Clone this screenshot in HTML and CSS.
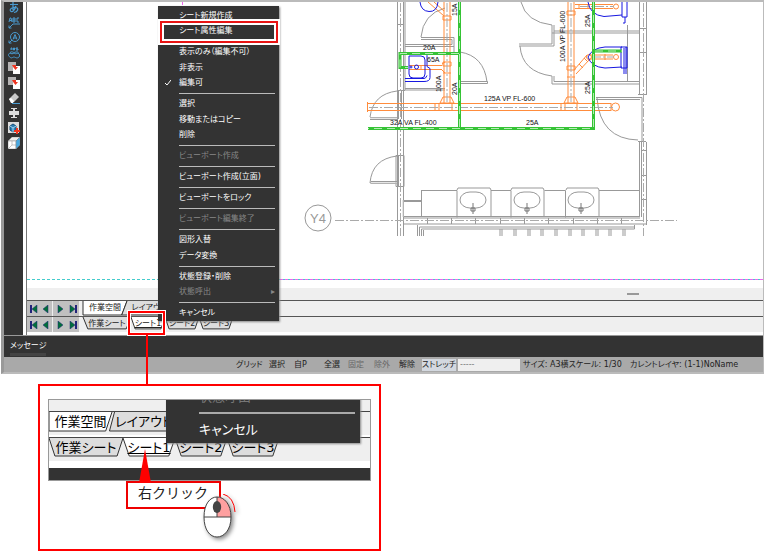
FILE: index.html
```html
<!DOCTYPE html>
<html lang="ja">
<head>
<meta charset="utf-8">
<title>シート属性編集</title>
<link rel="stylesheet" href="styles.css">
</head>
<body>
<main class="page">
<section class="app">
  <div class="workspace">
    <nav class="toolbar" aria-label="ツール">
      <button aria-label="文字"><svg viewBox="0 0 12 12" fill="none" stroke="#4a9bd0" stroke-width="1.2"><path d="M2 2.500h8M5 0v8M8 4C7 8 4 11 2.500 9S5 5 8 5.500 10 10 6 10.500"/></svg></button>
      <button aria-label="引出文字"><svg viewBox="0 0 12 12" fill="none" stroke="#4a9bd0"><path d="M1 5l1-4h1l1 4M1.500 3.500h2M5 1v4h2V1H5M5 3h2M11 1H9v4h2M1 11l4-4h7M1 8.500V11h2.500"/></svg></button>
      <button aria-label="記号"><svg viewBox="0 0 12 12" fill="none" stroke="#4a9bd0"><circle cx="7" cy="5" r="4.500"/><path d="M5 7.500l2-5 2 5M5.500 6h3M4 8l-3 3M1 8.500V11h2.500"/></svg></button>
      <button aria-label="雲マーク"><svg viewBox="0 0 12 12" fill="none" stroke="#4a9bd0"><path d="M3 3V1h1v2M5.500 1v2h1V1zM10 1H8v1h2v1H8M2 5.500c2-1.500 3 0 4 0s3-1.500 4.500 0M2 6c-2 1-2 3 0 4 1 2 3 0 4 0s3 2 5 0c1-1 1-3-1-4-2 1-3 1-4 0-1 1-3 1-4 0z"/></svg></button>
      <button aria-label="コピー"><svg viewBox="0 0 12 12"><path d="M0 0h8v9H0z" fill="#b5b3b3"/><path d="M5 4h7v8H5z" fill="#fff"/><path d="M4 3l4 0v2h2L7.500 8 5.500 5.500z" fill="#ef3420"/></svg></button>
      <button aria-label="移動"><svg viewBox="0 0 12 12"><path d="M0 0h8v8H0z" fill="#b5b3b3"/><path d="M5 3h7v9H5z" fill="#fff"/><path d="M4 3l4 0v2h2L7.500 8 5.500 5.500z" fill="#ef3420"/></svg></button>
      <button aria-label="消去"><svg viewBox="0 0 12 12"><path d="M1 7l6-6 4 4-5 5H3z" fill="#c9c9c9"/><path d="M1 7l2-1 3 3-1 2H3z" fill="#fff"/><path d="M4 11.500h8" stroke="#4a9bd0"/></svg></button>
      <button aria-label="寸法"><svg viewBox="0 0 12 12" fill="#ddd"><path d="M3 1h6v1H7v2h4v4H7v2h2v1H3v-1h2V8H1V4h4V2H3z"/></svg></button>
      <button aria-label="部品"><svg viewBox="0 0 12 12"><path d="M0 0h11v11H0z" fill="#ddd"/><path d="M2 4l3-2 3 2v4L5 10 2 8z" fill="#2d7fb5" stroke="#154d77"/><path d="M2 4l3 2 3-2M5 6v4" fill="none" stroke="#a8d6ef"/><path d="M8 6h2v2h2v2h-2v2H8v-2H6V8h2z" fill="#ef3420"/></svg></button>
      <button aria-label="立体"><svg viewBox="0 0 12 12" stroke="#888" stroke-width=".5"><path d="M0 4l4-4h8L8 4z" fill="#eee"/><path d="M0 4h8v8H0z" fill="#fff"/><path d="M8 4l4-4v8l-4 4z" fill="#48a8e0"/><path d="M0 12l4-4h4M4 4v4" fill="none"/></svg></button>
    </nav>
    <div class="sheet-area">
      <svg class="drawing" viewBox="27 2 736 286" preserveAspectRatio="xMinYMin meet" role="img" aria-label="配管図">
        <g class="thin">
          <path d="M397.500 2V236M403.500 2V236M405 2V90M397 24.500h7M397 90.500h8M370 117.500h27M370 119.500h27M370 117Q373 94 397 91M398.500 91v28M401.500 91v28"/>
          <path d="M370 183Q372 159 397 156M371 181.500h26M371 183.500h26M370 183h1M396 155.500h8v31h-8zM398.500 156v30"/>
          <path d="M421 37.500h33v15h4M421 39.500h31v5M421 37Q423 14 445 8M405 44.500h47M405 46.500h49M460 52Q484 56 487 82M458 81.500h29.500v2H458M405 88.500h40M405 90h40"/>
          <path d="M521 2Q526 22 552 25v8h87M554 25v6h85M552 33v11h-33M554 31v15h-35M520 46Q522 72 552 76v8h87M554 76v5.500h85M627.500 25v57"/>
          <path d="M639.500 2v93M646.500 2v92M640 28.500h6M640 52.500h6M638 94.500h9M596 97.500h46v44M596 99.500h44M597 98Q600 139 638 140M638 141.500h8"/>
          <path d="M639.500 142v75M641.500 142v75M646.500 142v83M642 150.500h4M642 175.500h4M642 199.500h4"/>
          <path d="M403 200.500h18M404 201.500h17M421 190.500h36v27M421.500 190v27M457 190l1-2h32l1 2v27M491 190.500h20v27M511 190l1-2h31l1 2v27M544.500 190.500h21v27M566 190l1-2h31l1 2v27M599 190.500h40"/>
          <path d="M403 216.500h237M403 218h237M403 224h244M427.500 218v6M451.500 218v6M475.500 218v6M500.500 218v6M524.500 218v6M548.500 218v6M573.500 218v6M597.500 218v6M621.500 218v6"/>
          <path d="M417.500 236v-11M419.500 236v-9h215M421.500 236v-7h213V225M423.500 236v-6"/>
          <path d="M500 229v7m2-7v7m12-7v7m2-7v7m12-7v7m2-7v7m11-7v7m2-7v7m12-7v7m2-7v7m12-7v7m2-7v7m11-7v7m2-7v7m12-7v7m2-7v7m11-7v7m2-7v7m12-7v7m2-7v7"/>
          <rect x="460" y="192" width="26" height="16" rx="10"/><rect x="514" y="192" width="26" height="16" rx="10"/><rect x="568" y="192" width="26" height="16" rx="10"/>
          <circle cx="318" cy="218" r="13"/>
        </g>
        <g class="shade"><path d="M421 227h213M403 200v17M370 118h27M371 183h26"/></g>
        <g class="faucet"><path d="M473 203v11M471 208h4v3h-4zM527 203v11M525 208h4v3h-4zM581 203v11M579 208h4v3h-4z"/></g>
        <g class="axis"><path d="M335 220.500H677M400.500 3V236M643.500 3V236"/></g>
        <g class="orange">
          <path d="M444 2v101M450 2v101M443 16h8v4h-8zM443 62h8v4h-8zM443 73h8M443 97h8l3 6h-14zM368 103.500h243M368 110.500h243M367.500 102v10M435 103v8M439 103v8M452 103v8M428 2l16 14M434 2l10 9M409 65.500h33M409 69.500h33M421 65v4M442 64l3-2M442 70l3 3"/>
          <path d="M568 2v101M574 2v101M567 11h8v4h-8zM567 66h8v4h-8zM567 77h8M567 97h8l3 6h-14zM561 103v8M565 103v8M577 103v8M611 103v8M575 4.500h38M575 8.500h38M579 4v5M588 4v5M590 55h23M590 59h23M594 54v6M605 54v6M574 70l13-15M576 74l14-15M579 64l4 4M584 58l4 4"/>
          <circle cx="615.500" cy="107" r="4"/><circle cx="616" cy="6.500" r="2.500"/><circle cx="616" cy="57" r="2.500"/><circle cx="589" cy="57" r="2.500"/>
        </g>
        <g class="axis"><path d="M447 3v101M571 3v101M369 107.500h244M592 57h22M580 6.500h34"/></g>
        <g class="blue">
          <path d="M420 2Q421 11 429 11.500T438 2"/>
          <path d="M405 52.500h19q3 0 3 3v11l3 2v9q0 4-6 4h-19M405 78.500h19q2 0 3-3M409 56h12q4 0 4 4v14q0 4-4 4h-8q-4 0-4-4z"/><circle cx="416.500" cy="67" r="2"/><circle cx="411" cy="67" r="1"/>
          <path d="M588 2Q590 15 604 16.500L622 15M622 2v15h5V2M625 17v6h-2M622 47h-17q-13 1-17 10 3 10 17 11l17-1M621 47h6v21h-6zM624 48v26M626 47v27"/>
        </g>
        <g class="green"><path d="M459.500 2v126M593.500 2v126.500H368M459 53.500h-59v14h8M595 51h27"/></g>
        <g class="green-core"><path d="M459.500 2v126M593.500 2v126.500H368M459 53.500h-59v14h8M595 51h27"/></g>
        <g class="pipe-label">
          <text x="423" y="50">20A</text><text x="427" y="62">65A</text>
          <text x="484" y="101">125A VP FL-600</text><text x="390" y="125">32A VA FL-400</text><text x="526" y="125">25A</text>
          <text transform="translate(441 92) rotate(-90)">100A</text><text transform="translate(457 95) rotate(-90)">20A</text>
          <text transform="translate(457 16) rotate(-90)">15A</text><text transform="translate(565 62) rotate(-90)">100A VP FL-600</text>
          <text transform="translate(590 27) rotate(-90)">25A</text><text transform="translate(590 94) rotate(-90)">25A</text>
        </g>
        <text class="grid-label" x="318" y="223">Y4</text>
        <path class="paper-edge" d="M27 279.500h736"/><path class="paper-edge pink" d="M182.500 2v3M280 279.500h483"/>
      </svg>
      <div class="scroll"><span></span></div>
      <div class="sheetbar layouts">
        <div class="steps">
          <button aria-label="先頭"><svg viewBox="0 0 8 8"><path class="bar" d="M1 0v8"/><path d="M7 0v8L2 4z"/></svg></button>
          <button aria-label="前へ"><svg viewBox="0 0 8 8"><path d="M6 0v8L1 4z"/></svg></button>
          <button aria-label="次へ"><svg viewBox="0 0 8 8"><path d="M2 0v8l5-4z"/></svg></button>
          <button aria-label="末尾"><svg viewBox="0 0 8 8"><path d="M1 0v8l5-4z"/><path class="bar" d="M7 0v8"/></svg></button>
        </div>
        <div class="tabs">
          <button class="tab on"><svg viewBox="0 0 100 100" preserveAspectRatio="none"><path d="M0 0V100H88L100 0"/></svg>作業空間</button>
          <button class="tab"><svg viewBox="0 0 100 100" preserveAspectRatio="none"><path d="M0 0L-12 100H88L100 0"/></svg>レイアウト</button>
        </div>
      </div>
      <div class="sheetbar">
        <div class="steps">
          <button aria-label="先頭"><svg viewBox="0 0 8 8"><path class="bar" d="M1 0v8"/><path d="M7 0v8L2 4z"/></svg></button>
          <button aria-label="前へ"><svg viewBox="0 0 8 8"><path d="M6 0v8L1 4z"/></svg></button>
          <button aria-label="次へ"><svg viewBox="0 0 8 8"><path d="M2 0v8l5-4z"/></svg></button>
          <button aria-label="末尾"><svg viewBox="0 0 8 8"><path d="M1 0v8l5-4z"/><path class="bar" d="M7 0v8"/></svg></button>
        </div>
        <div class="tabs">
          <button class="tab wide"><svg viewBox="0 0 100 100" preserveAspectRatio="none"><path d="M0 0L10 85H90L100 0"/></svg>作業シート</button>
          <button class="tab on current"><svg viewBox="0 0 100 100" preserveAspectRatio="none"><path d="M0 0L12 85H88L100 0"/></svg>シート1</button>
          <button class="tab"><svg viewBox="0 0 100 100" preserveAspectRatio="none"><path d="M0 0L12 85H88L100 0"/></svg>シート2</button>
          <button class="tab"><svg viewBox="0 0 100 100" preserveAspectRatio="none"><path d="M0 0L12 85H88L100 0"/></svg>シート3</button>
        </div>
      </div>
    </div>
  </div>
  <div class="message"><span>メッセージ</span></div>
  <footer class="status">
    <button>グリッド</button><button>選択</button><button>自P</button><button>全選</button><button disabled>固定</button><button disabled>除外</button><button>解除</button><button class="pressed">ストレッチ</button>
    <input aria-label="選択条件" value="-----">
    <span>サイズ: A3横スケール: 1/30</span><span>カレントレイヤ: (1-1)NoName</span>
  </footer>
</section>

<div class="menu" role="menu">
  <button role="menuitem">シート新規作成</button>
  <button role="menuitem" class="target">シート属性編集</button>
  <hr>
  <button role="menuitem">表示のみ（編集不可）</button>
  <button role="menuitem">非表示</button>
  <button role="menuitem" class="checked"><svg viewBox="0 0 6 6"><path d="M0 3l2 2 4-5"/></svg>編集可</button>
  <hr>
  <button role="menuitem">選択</button>
  <button role="menuitem">移動またはコピー</button>
  <button role="menuitem">削除</button>
  <hr>
  <button role="menuitem" disabled>ビューポート作成</button>
  <hr>
  <button role="menuitem">ビューポート作成(立面)</button>
  <hr>
  <button role="menuitem">ビューポートをロック</button>
  <hr>
  <button role="menuitem" disabled>ビューポート編集終了</button>
  <hr>
  <button role="menuitem">図形入替</button>
  <button role="menuitem">データ変換</button>
  <hr>
  <button role="menuitem">状態登録・削除</button>
  <button role="menuitem" class="sub" disabled>状態呼出</button>
  <hr>
  <button role="menuitem">キャンセル</button>
</div>
<div class="sheet-mark"></div>

<figure class="detail">
  <div class="closeup">
    <div class="close-scroll"></div>
    <div class="close-row layouts">
      <span class="tab on"><svg viewBox="0 0 100 100" preserveAspectRatio="none"><path d="M0 0V100H90L100 0"/></svg>作業空間</span>
      <span class="tab"><svg viewBox="0 0 100 100" preserveAspectRatio="none"><path d="M4 0L-4 100H90L100 0"/></svg>レイアウト</span>
    </div>
    <div class="close-row">
      <span class="tab wide"><svg viewBox="0 0 100 100" preserveAspectRatio="none"><path d="M0 0L8 100H92L100 0"/></svg>作業シート</span>
      <span class="tab on current"><svg viewBox="0 0 100 100" preserveAspectRatio="none"><path d="M0 0L12 100H88L100 0"/></svg>シート1</span>
      <span class="tab"><svg viewBox="0 0 100 100" preserveAspectRatio="none"><path d="M0 0L12 100H88L100 0"/></svg>シート2</span>
      <span class="tab"><svg viewBox="0 0 100 100" preserveAspectRatio="none"><path d="M0 0L12 100H88L100 0"/></svg>シート3</span>
    </div>
    <div class="close-base"></div>
    <div class="close-menu"><i>状態呼出</i><hr><span>キャンセル</span></div>
  </div>
  <figcaption class="callout">右クリック</figcaption>
  <svg class="pointer" viewBox="0 0 12 34"><path d="M6 0l6 34H0z"/></svg>
  <svg class="mouse" viewBox="0 0 40 48">
    <path class="body" d="M3 23C3 10 9 3 16 3s14 7 14 20-7 20-14 20S3 36 3 23z"/>
    <path class="right" d="M16 3c8 0 14 7 14 20H16z"/>
    <path class="line" d="M3 23h27M16 3v20M3 23C3 10 9 3 16 3s14 7 14 20-7 20-14 20S3 36 3 23z"/>
    <ellipse cx="16" cy="13" rx="4.200" ry="6"/>
    <path class="click" d="M22 0Q33 3 34 18"/>
  </svg>
</figure>
</main>
</body>
</html>
```
FILE: styles.css
```css
* { box-sizing: border-box; }
body { margin: 0; background: #fff; font-family: "DejaVu Sans", "Noto Sans CJK JP", sans-serif; font-size: 8px; line-height: 12px; font-feature-settings: "palt"; }
button, input { margin: 0; padding: 0; border: 0; background: none; color: inherit; font: inherit; font-feature-settings: inherit; white-space: nowrap; }
.page { position: relative; }

.app { margin: 0 1px; border: 2px solid #bbb; border-left: 3px solid #999; border-right-width: 1px; border-top: 2px solid #bbb; color: #222; }
.workspace { display: flex; background: #fff; }
.toolbar { width: 19px; background: #333; display: flex; flex-direction: column; align-items: center; gap: 3px; overflow: hidden; }
.toolbar button { width: 12px; height: 12px; }
.toolbar svg { display: block; width: 12px; }
.sheet-area { flex: 1; min-width: 0; margin-left: 3px; border-left: 1px solid #777; }

.drawing { display: block; width: 100%; }
.thin, .orange, .blue, .shade, .axis, .faucet, .green, .green-core { fill: none; }
.thin { stroke: #999; }
.shade { stroke: #ccc; }
.axis { stroke: #aaa; stroke-dasharray: 9 2 2 2; }
.faucet { stroke: #777; }
.orange { stroke: #ff8c3c; }
.blue { stroke: #1717e0; }
.green { stroke: #35c335; stroke-width: 3; }
.green-core { stroke: #b4ecb4; stroke-dasharray: 8 5; }
.pipe-label { font: 7px "Liberation Sans", sans-serif; fill: #111; }
.grid-label { font: 13px "Liberation Sans", sans-serif; fill: #999; text-anchor: middle; }
.paper-edge { stroke: #4cc; stroke-dasharray: 3 2; }
.pink { stroke: #e6e; }

.scroll { height: 12px; background: #efefef; padding: 5px 124px 0 0; }
.scroll span { display: block; width: 12px; height: 2px; margin-left: auto; background: #999; }
.sheetbar { display: flex; height: 16px; background: #efefef; border-top: 1px solid #555; }
.sheetbar:last-child { height: 19px; border-bottom: 3px solid #fff; }
.steps { width: 52px; display: flex; justify-content: space-around; align-items: center; background: #c0c0c0; margin-right: 4px; }
.steps button { width: 13px; height: 15px; display: grid; place-items: center; }
.steps button:nth-child(2) { border-right: 1px solid #eee; }
.steps svg { width: 8px; height: 8px; fill: #007038; stroke: #22227a; stroke-width: .5; }
.steps .bar { stroke-width: 2; }
.tabs { display: flex; }
.tab { position: relative; z-index: 0; height: 14px; width: 34px; line-height: 14px; text-align: center; white-space: nowrap; }
.tab svg { position: absolute; inset: 0; width: 100%; height: 100%; z-index: -1; fill: #ddd; overflow: visible; }
.tab path { stroke: #333; vector-effect: non-scaling-stroke; }
.tab.on svg { fill: #fff; }
.tab.current { text-decoration: underline; }
.tabs .tab.wide { width: 48px; }
.layouts .tabs .tab { width: 44px; }

.message { height: 22px; background: #333; color: #fff; border-top: 1px solid #999; padding: 3px 6px 0; }
.message span { display: inline-block; border-bottom: 3px solid #444; line-height: 14px; }
.status { display: grid; grid-template-columns: 33px 25px 30px 24px 26px 25px 23px 34px 67px 107px 1fr; align-items: center; height: 15px; padding-left: 232px; background: #a9a9a9; white-space: nowrap; }
.status button { text-align: left; }
.status button:disabled { color: #666; }
.status .pressed { background: #d3d8df; text-align: center; height: 12px; }
.status input { background: #efefef; height: 12px; width: 62px; margin-left: 2px; padding-left: 2px; color: #777; }

.menu { position: absolute; left: 158px; top: 6px; width: 121px; height: 315px; padding: 2px 0 0; display: flex; flex-direction: column; background: #333; color: #fff; box-shadow: 1px 1px 2px #888; }
.menu button { position: relative; flex: 31 1 0; min-height: 0; padding-left: 21px; text-align: left; }
.menu button:disabled { color: #888; }
.menu hr { flex: 11 1 0; margin: 0 4px 0 21px; border: 0; background: linear-gradient(#bbb, #bbb) center / 100% 1px no-repeat; }
.menu .target::after { content: ""; position: absolute; inset: -3px 1px -4px 2px; border: 2px solid #e81414; outline: 2px solid #fff; box-shadow: inset 0 0 0 2px #fff; }
.checked svg { position: absolute; left: 7px; top: 4px; width: 6px; height: 6px; fill: none; stroke: #fff; }
.sub::after { content: "▸"; position: absolute; right: 4px; }

.sheet-mark { position: absolute; left: 128px; top: 311px; width: 37px; height: 24px; border: 2px solid #f00; outline: 1px solid #fff; box-shadow: inset 0 0 0 1px #fff; }
.sheet-mark::after { content: ""; position: absolute; left: 16px; top: 22px; width: 2px; height: 50px; background: #f00; }

.detail { position: relative; width: 343px; margin: 10px 0 0 38px; padding: 13px 8px 68px; border: 2px solid #f00; font-size: 13px; line-height: 24px; }
.closeup { position: relative; overflow: hidden; border: 1px solid #999; height: 82px; background: #fff; }
.close-scroll { height: 11px; background: #efefef; }
.close-row { display: flex; height: 26px; background: #efefef; border-top: 1px solid #444; border-bottom: 2px solid #fff; }
.close-row .tab { height: 18px; width: 52px; line-height: 20px; }
.close-row.layouts .tab { height: 19px; width: 63px; }
.close-row .tab.wide { width: 74px; }
.close-base { height: 16px; margin-top: 5px; background: #333; }
.close-menu { position: absolute; left: 117px; top: -17px; width: 194px; height: 60px; padding: 0 5px 0 33px; background: #333; color: #fff; box-shadow: 1px 1px 2px #888; }
.close-menu i { display: block; height: 29px; font-style: normal; color: #777; line-height: 28px; }
.close-menu hr { margin: 0; border: 0; height: 2px; background: #aaa; }
.close-menu span { display: block; line-height: 32px; }
.callout { position: absolute; left: 86px; top: 95px; width: 95px; height: 28px; padding-left: 10px; border: 2px solid #e00; background: #fff; font-size: 14px; font-feature-settings: normal; line-height: 21px; color: #222; }
.pointer { position: absolute; left: 99px; top: 63px; width: 12px; height: 34px; fill: #f00; }
.mouse { position: absolute; left: 161px; top: 108px; width: 40px; height: 48px; fill: #444; filter: drop-shadow(2px 2px 2px #888); }
.mouse .body { fill: #fff; }
.mouse .right { fill: #ffa0a0; }
.mouse .line { fill: none; stroke: #444; }
.mouse .click { fill: none; stroke: #f00; }
```
